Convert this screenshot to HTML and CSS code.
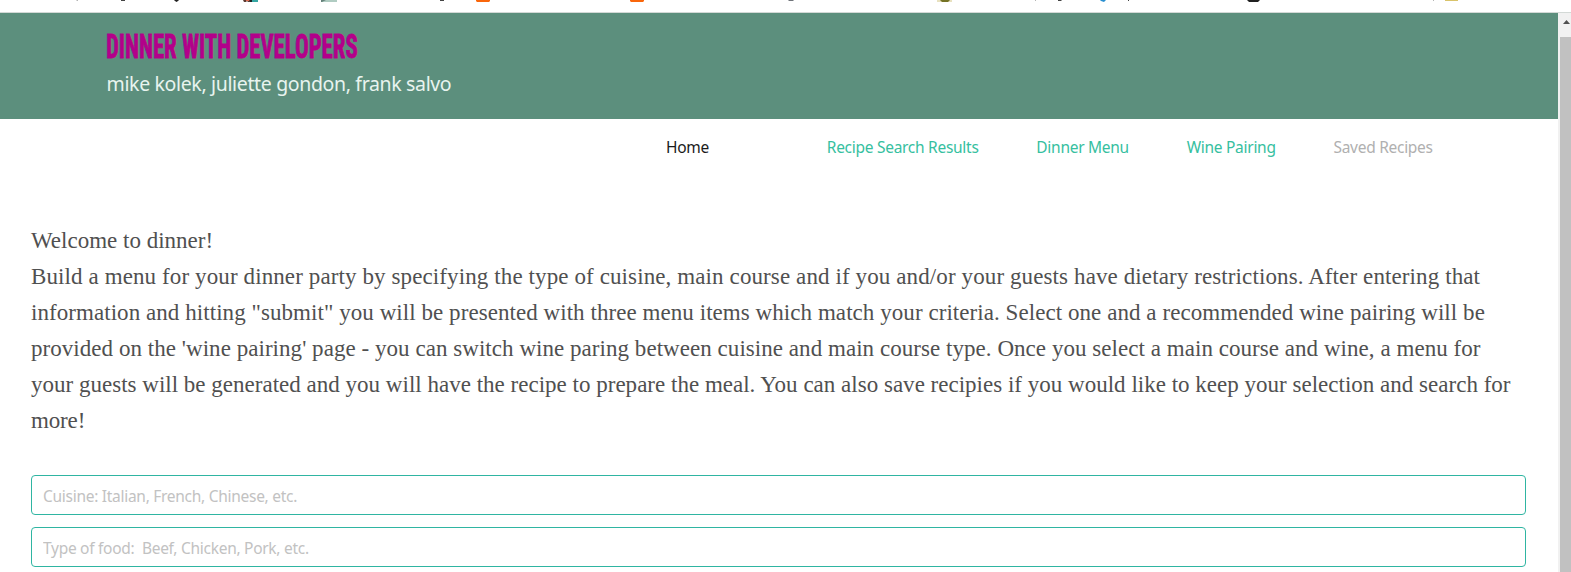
FILE: index.html
```
<!DOCTYPE html>
<html lang="en">
<head>
<meta charset="utf-8">
<title>Dinner with Developers</title>
<link rel="stylesheet" href="styles.css">
</head>
<body>
<div class="bookmarks">
  <svg width="1571" height="3" viewBox="0 0 1571 3" aria-hidden="true">
    <path fill="#b5b5b5" d="M76.500 0h1.500v1h-1.500zM1035 0h1v1h-1zM1433 0h1v1h-1z"/>
    <path fill="#444" d="M121 0h4v1h-4zM440 0h4v1h-4zM1058 0h4l-1 1h-3zM1128 0h1v1h-1z"/>
    <path fill="#222" d="M174 0h5l-1 1-1.500 1-1.500-1z"/>
    <path fill="#5b3a32" d="M243 0h8v2h-3l-1-1-1 1h-2z"/>
    <path fill="#e06a4e" d="M246 0h3v1h-3z"/>
    <path fill="#35a6a3" d="M252 0h6v2h-6z"/>
    <path fill="#222" d="M250 0h2v2h-2z"/>
    <path fill="#b0ccc2" d="M321 0h16v2h-16z"/>
    <path fill="#66827b" d="M321 0h5l-4 2h-1z"/>
    <path fill="#f9660b" d="M476 0h14v1l-1 1h-12l-1-1zM630 0h14v1l-1 1h-12l-1-1z"/>
    <path fill="#70747a" d="M788 0h6l-1 1h-4z"/>
    <path fill="#e8e1bf" d="M937 0h15v2h-15z"/>
    <path fill="#757326" d="M940 0h10l-2 2h-6z"/>
    <path fill="#2a8fd0" d="M1100 0h6l-2 2-3-1z"/>
    <path fill="#202020" d="M1247 0h13l-2 2h-9z"/>
    <path fill="#d9c36a" d="M1445 0h13v1h-13z"/>
  </svg>
</div>
<div class="viewport">
  <div class="page">
    <header class="hero">
      <h1 class="title">DINNER WITH DEVELOPERS</h1>
      <p class="subtitle">mike kolek, juliette gondon, frank salvo</p>
    </header>
    <nav class="nav">
      <a class="nav-link home">Home</a>
      <a class="nav-link">Recipe Search Results</a>
      <a class="nav-link">Dinner Menu</a>
      <a class="nav-link">Wine Pairing</a>
      <a class="nav-link disabled">Saved Recipes</a>
    </nav>
    <main class="content">
      <div class="intro">
        <p class="l1">Welcome to dinner!</p>
        <p class="l2">Build a menu for your dinner party by specifying the type of cuisine, main course and if you and/or your guests have dietary restrictions. After entering that</p>
        <p class="l3">information and hitting "submit" you will be presented with three menu items which match your criteria. Select one and a recommended wine pairing will be</p>
        <p class="l4">provided on the 'wine pairing' page - you can switch wine paring between cuisine and main course type. Once you select a main course and wine, a menu for</p>
        <p class="l5">your guests will be generated and you will have the recipe to prepare the meal. You can also save recipies if you would like to keep your selection and search for</p>
        <p class="l6">more!</p>
      </div>
      <form class="search">
        <input class="input" type="text" placeholder="Cuisine: Italian, French, Chinese, etc.">
        <input class="input" type="text" placeholder="Type of food:  Beef, Chicken, Pork, etc.">
      </form>
    </main>
  </div>
  <div class="scrollbar">
    <div class="arrow"><svg width="7" height="4" viewBox="0 0 7 4" aria-hidden="true"><path fill="#505050" d="M3.500 0 7 4H0z"/></svg></div>
    <div class="thumb"></div>
  </div>
</div>
</body>
</html>
```

FILE: styles.css
```
* { box-sizing: border-box; }
body {
  margin: 0;
  height: 572px;
  overflow: hidden;
  background: #fff;
  font-family: "Noto Sans", "Open Sans", sans-serif;
}
h1, p { margin: 0; font-weight: 400; }

.bookmarks { height: 13px; border-bottom: 1px solid #d3d9d6; }
.bookmarks svg { display: block; }

.viewport { display: flex; height: 559px; }
.page { width: 1558px; flex: none; }

.hero { height: 106px; padding: 16px 0 0 106px; background: #5c8f7d; }
.title {
  width: max-content;
  height: 36px;
  font: 700 33px/36px "Roboto Condensed", Roboto, sans-serif;
  color: #b3008a;
  -webkit-text-stroke: .8px #b3008a;
  transform: scaleX(.69);
  transform-origin: left;
  white-space: nowrap;
}
.subtitle {
  padding: 5px 0 0 .500px;
  font-size: 19.500px;
  line-height: 28px;
  letter-spacing: -.350px;
  color: #e8f4ef;
}

.nav { display: flex; gap: 57.800px; padding: 17px 0 0 666px; height: 104px; }
.nav-link {
  font-size: 15.500px;
  line-height: 22px;
  letter-spacing: -.280px;
  color: #36c0a0;
  white-space: nowrap;
}
.nav-link.home { color: #1a1a1a; margin-right: 60px; }
.nav-link.disabled { color: #b0b0b0; }

.content { padding: 0 32px 0 31px; }
.intro {
  font: 23px/36px "Liberation Serif", serif;
  color: #505050;
  white-space: nowrap;
}
.l2 { letter-spacing: .108px; }
.l3 { letter-spacing: .058px; }
.l4 { letter-spacing: .044px; }
.l5 { letter-spacing: .010px; }
.l6 { letter-spacing: -.150px; }

.search { display: grid; gap: 12px; padding-top: 36px; }
.input {
  width: 100%;
  height: 40px;
  padding: 1px 11px 0;
  border: 1px solid #2fb5a2;
  border-radius: 4px;
  background: #fff;
  font: 15.500px "Noto Sans", "Open Sans", sans-serif;
  letter-spacing: -.280px;
}
.input::placeholder { color: #c2c2c2; opacity: 1; }

.scrollbar { flex: 1; background: #f1f1f1; padding-left: 2px; }
.arrow { height: 24px; padding: 7px 0 0 3px; }
.arrow svg { display: block; }
.thumb { height: 535px; background: #c1c1c1; }
```
